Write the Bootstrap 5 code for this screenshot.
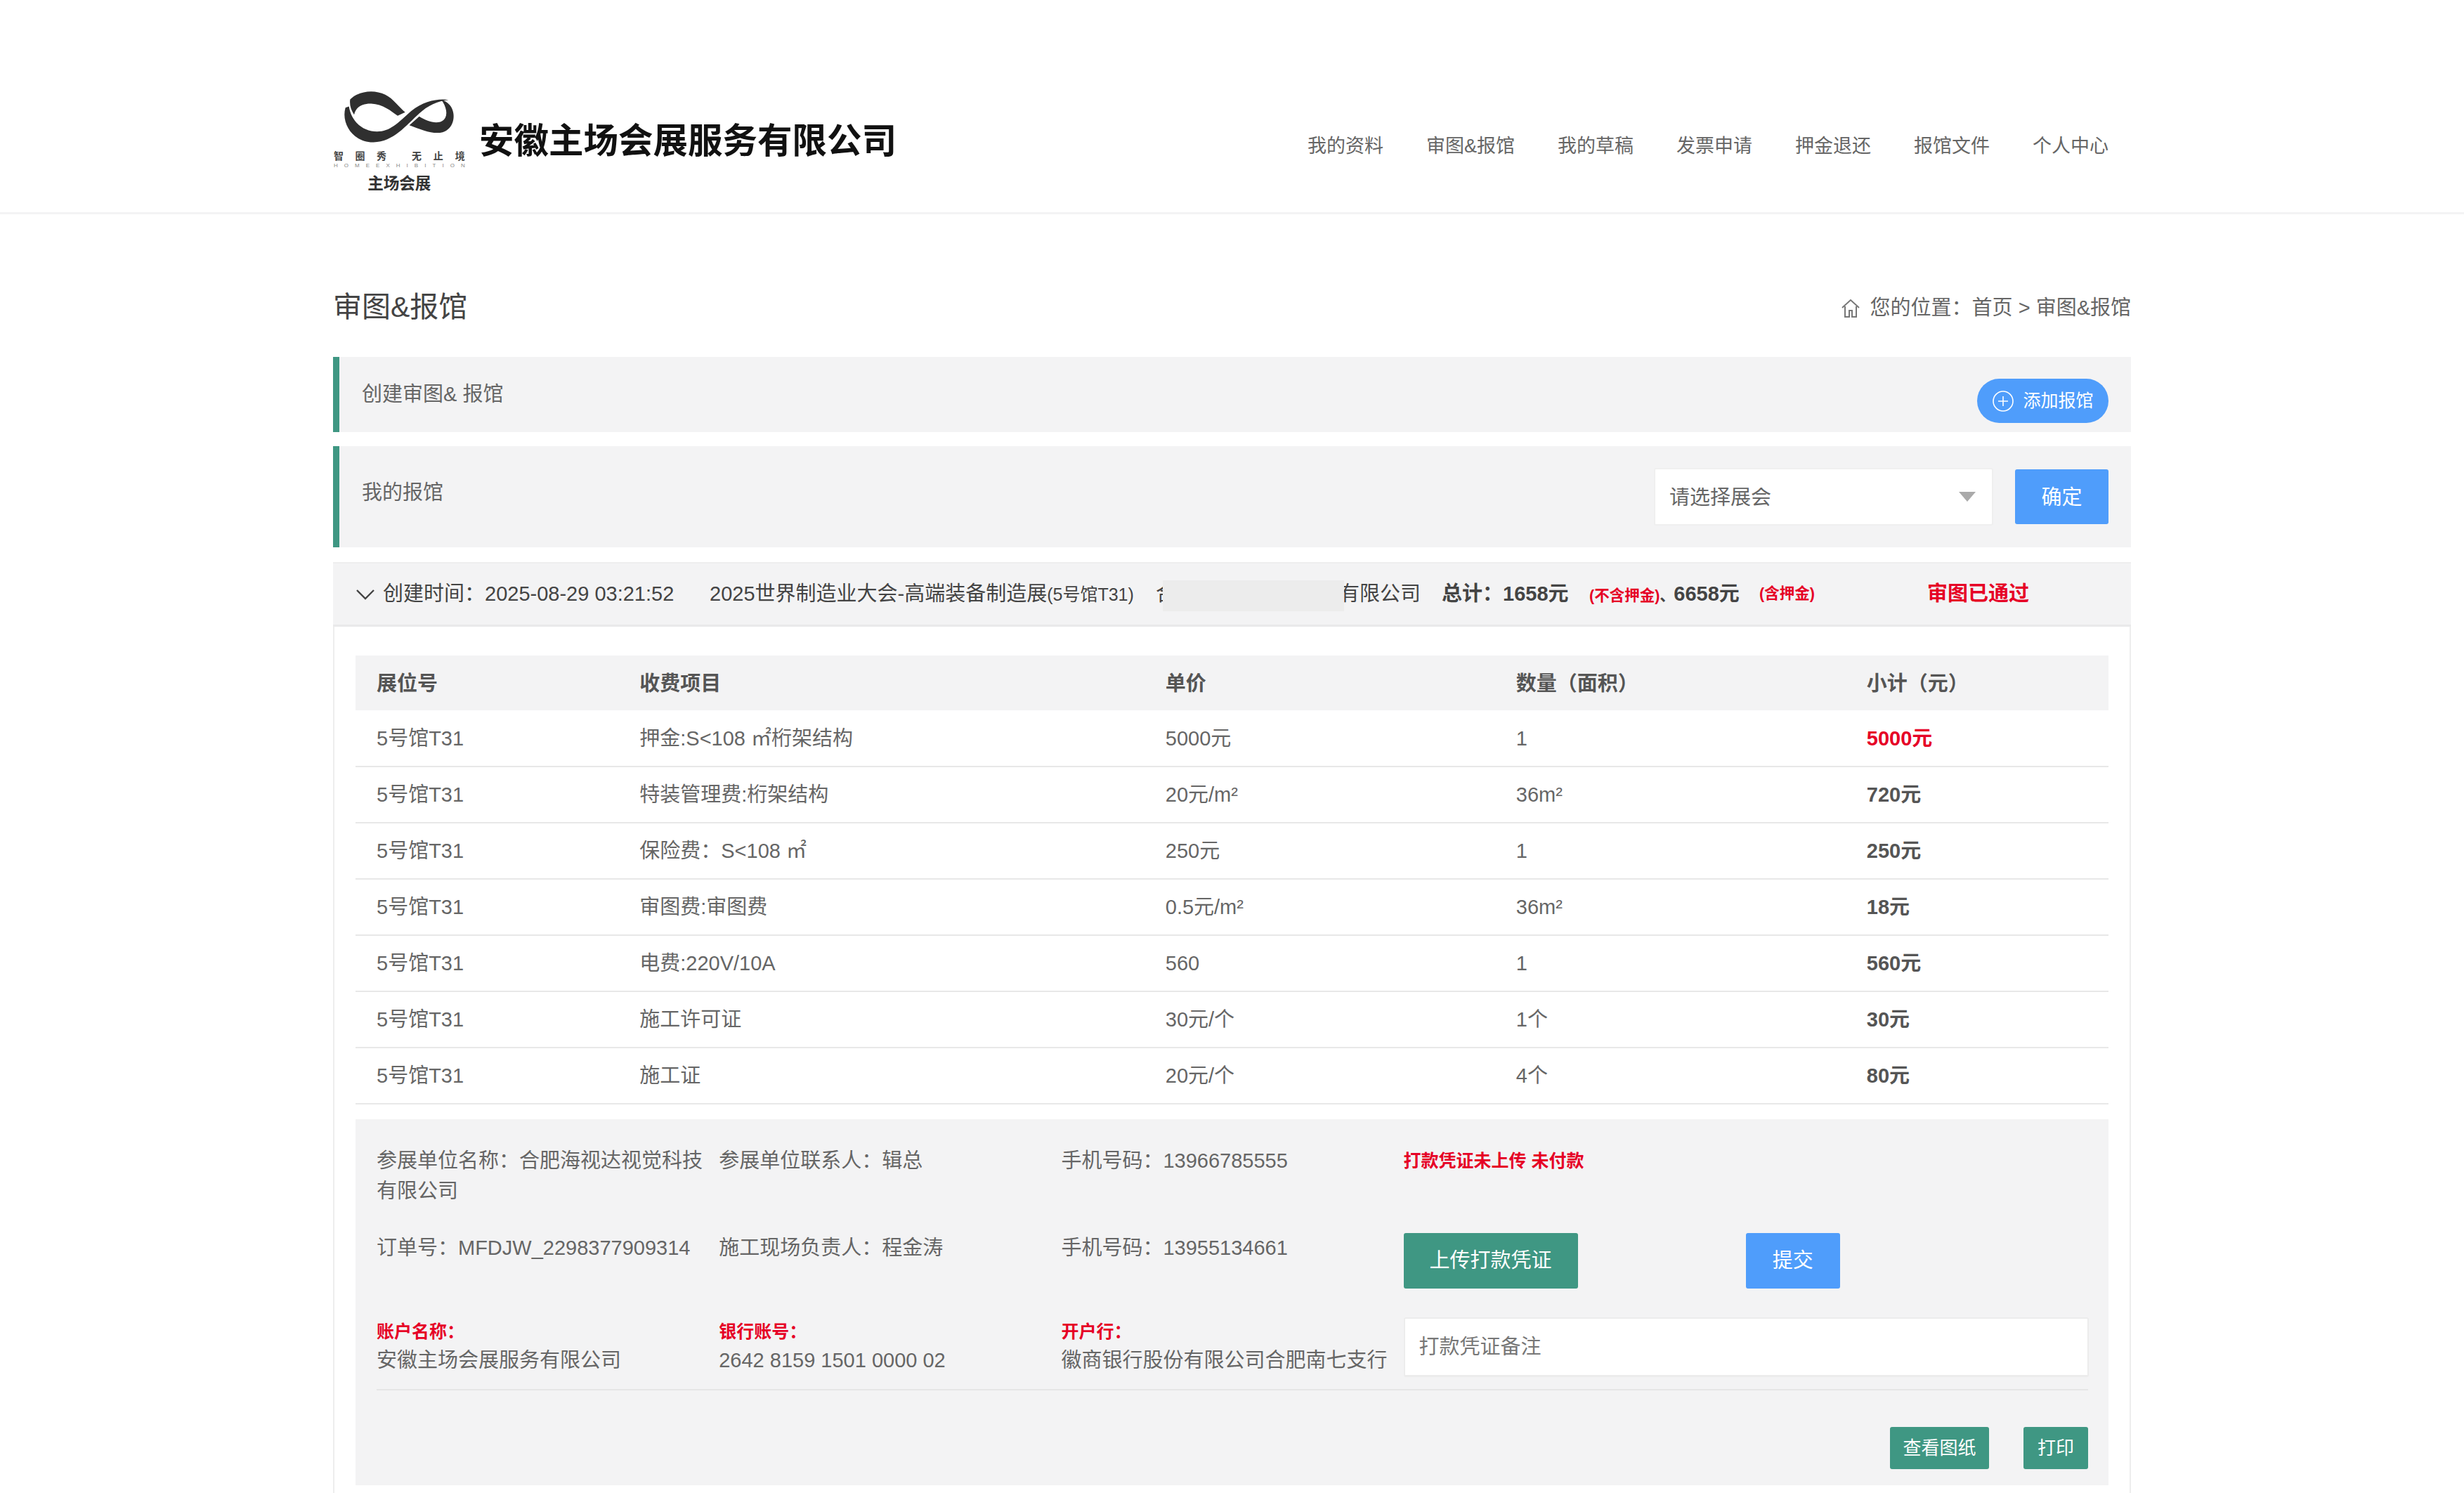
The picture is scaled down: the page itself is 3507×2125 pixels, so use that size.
<!DOCTYPE html>
<html lang="zh-CN">
<head>
<meta charset="utf-8">
<title>审图&amp;报馆</title>
<link href="https://cdn.jsdelivr.net/npm/bootstrap@5.3.0/dist/css/bootstrap.min.css" rel="stylesheet">
<style>
html,body{height:2125px;overflow:hidden}
body{font-family:"Liberation Sans","Noto Sans CJK SC",sans-serif;font-size:29px;color:#666;background:#fff}
.site-top{height:305px;border-bottom:3px solid #f3f3f4}
.wrap{width:2559px;margin-left:474px}
.top-inner{padding-top:128px;height:302px}
.logo-svg{width:190px;height:147px;flex:none}
.brand{font-size:49.5px;font-weight:700;color:#111;margin-left:18px;line-height:1;margin-top:48px;white-space:nowrap}
.top-menu{margin-left:auto;margin-right:32px;gap:61px;margin-top:64px;font-size:27px;line-height:32px}
.top-menu a{color:#666;text-decoration:none}
.crumb-row{height:203px;padding-top:104px}
.page-name{font-size:41px;line-height:56px;color:#444;font-weight:400;margin:0}
.trail{font-size:29px;color:#666;gap:14px;margin-top:8px}
.panel-line{background:#f3f3f4;border-left:9px solid #3f9783;padding-left:32px;padding-right:32px}
.panel-a{height:107px;margin-bottom:20px}
.panel-b{height:144px;margin-bottom:21px}
.panel-a .lab{margin-top:1px}
.panel-b .lab{margin-top:-11px}
.pill{background:#4f9dfb;color:#fff;border:0;border-radius:32px;height:63px;width:187px;font-size:25px;margin-top:18px;gap:12px;padding:0;display:flex;align-items:center;justify-content:center}
.pick{width:483px;height:82px;font-size:29px;line-height:1;color:#666;border:2px solid #efefef;border-radius:3px;padding:2px 20px 0;background-size:30px 18px;background-position:right 20px center;background-image:url("data:image/svg+xml,%3Csvg xmlns='http://www.w3.org/2000/svg' viewBox='0 0 30 18'%3E%3Cpath d='M3 2h24L15 16z' fill='%23aaa'/%3E%3C/svg%3E")}
.go{background:#4f9dfb;color:#fff;border:0;border-radius:3px;width:133px;height:78px;font-size:29px;margin-left:31px;padding:3px 0 0}
.order-box{border-left:2px solid #eee;border-right:2px solid #eee;height:1400px;border-radius:0;border-top:0;border-bottom:0;background:transparent}
.order-head{height:92px;background:#f3f3f4;border-bottom:3px solid #e9e9ea;color:#444;padding-left:33px;white-space:nowrap;position:relative;border-top:2px solid #eee;margin-left:-2px;margin-right:-2px;border-radius:0}
.order-head .t1{width:465px;margin-left:12px}
.order-head .t2{width:635px}
.order-head .t3{width:407px}
.order-head .t4{width:208px;font-weight:700}
.order-head .t7{font-weight:700;color:#e60026}
.mini{font-size:25px}
.tiny{font-size:21.5px;color:#e60026;font-weight:700}
.t-ex{width:214px;white-space:nowrap;margin-left:2px}
.t-in{width:239px;margin-left:28px}
.t-sep{color:#444;display:inline-block;width:14px}
.t-total{font-size:29px;color:#444;margin-left:6px}
.mask{position:absolute;left:1181px;top:24px;width:258px;height:44px;background:#ececec}
.order-body{padding:41px 30px 0}
.fee{margin:0;table-layout:fixed;--bs-table-bg:transparent;--bs-table-color:#666;font-size:29px;border-color:#e6e6e6}
.fee th{height:78px;background:#f3f3f4;color:#555;font-weight:700;vertical-align:middle;padding:3px 30px 0;border:0}
.fee td{height:80px;vertical-align:middle;padding:2px 30px 0;border-bottom:2px solid #e8e8e8;color:#666}
.fee td.sum{font-weight:700;color:#555}
.fee td.sum-red{color:#e60026}
.info{background:#f3f3f4;margin-top:21px;height:521px;padding:38px 29px 0 30px;line-height:42.5px}
.gap-a{margin-bottom:39px}
.gap-b{margin-bottom:41px}
.warn{color:#e60026;font-weight:700;font-size:25px}
.warn-lab{color:#e60026;font-weight:700;font-size:25px;line-height:30px;margin-top:5px;margin-bottom:5px}
.span-two{width:40%!important}
.act{border:0;border-radius:3px;color:#fff;padding:0;font-size:29px}
.act-green{background:#3f9783}
.act-blue{background:#4f9dfb}
.act-up{width:248px;height:79px}
.act-sub{width:134px;height:79px}
.memo{height:85px;border:2px solid #ececec;border-bottom-width:3px;border-radius:3px;font-size:29px;color:#666;padding:0 20px;width:975px;background:#fff}
.memo::placeholder{color:#777}
.rule{border-bottom:2px solid #e6e6e6;margin-top:17px;margin-bottom:52px}
.act-sm{height:60px;font-size:26px}
.w-look{width:141px;margin-right:49px}
.w-print{width:92px}
</style>
</head>
<body>
<header class="site-top">
  <div class="wrap d-flex top-inner">
    <svg class="logo-svg" viewBox="42 55 570 440" xmlns="http://www.w3.org/2000/svg" role="img" aria-label="主场会展">
      <path fill="#2f2f2f" d="M115 95C150 60 215 50 265 75C300 92 325 130 350 150L318 165C290 145 255 115 205 113C170 112 140 125 132 160C118 140 112 118 115 95Z"/>
      <path fill="#2f2f2f" d="M95 130C75 200 130 280 215 278C300 276 355 205 410 155C445 122 490 100 535 97C495 90 430 100 375 145C320 195 285 232 230 232C170 232 120 190 110 125Z"/>
      <path fill="#2f2f2f" d="M410 168L368 205C420 225 470 245 510 235C555 222 570 165 545 125C535 110 520 100 505 97C525 125 535 160 515 182C490 205 445 190 410 168Z"/>
      <text x="45" y="352" font-size="42" font-weight="700" fill="#444" textLength="225" lengthAdjust="spacing">智圈秀</text>
      <text x="378" y="352" font-size="42" font-weight="700" fill="#444" textLength="227" lengthAdjust="spacing">无止境</text>
      <text x="45" y="385" font-size="24" fill="#888" textLength="560" lengthAdjust="spacing">HOMEEXHIBITION</text>
      <text x="190" y="478" font-size="68" font-weight="700" fill="#333" textLength="270" lengthAdjust="spacing">主场会展</text>
    </svg>
    <div class="brand">安徽主场会展服务有限公司</div>
    <nav class="d-flex top-menu">
      <a href="#">我的资料</a><a href="#">审图&amp;报馆</a><a href="#">我的草稿</a><a href="#">发票申请</a><a href="#">押金退还</a><a href="#">报馆文件</a><a href="#">个人中心</a>
    </nav>
  </div>
</header>
<main class="wrap">
  <div class="d-flex justify-content-between align-items-start crumb-row">
    <h1 class="page-name">审图&amp;报馆</h1>
    <div class="d-flex align-items-center trail">
      <svg width="28" height="30" viewBox="0 0 28 30" fill="none" stroke="#777" stroke-width="2"><path d="M2 14 14 3l12 11M6 12v15h6v-9h4v9h6V12"/></svg>
      <span>您的位置：首页 &gt; 审图&amp;报馆</span>
    </div>
  </div>
  <section class="panel-line panel-a d-flex justify-content-between align-items-center">
    <span class="lab">创建审图&amp; 报馆</span>
    <button class="pill" type="button">
      <svg width="32" height="32" viewBox="0 0 32 32" fill="none" stroke="#fff" stroke-width="1.6"><circle cx="16" cy="16" r="14"/><path d="M16 9v14M9 16h14"/></svg>
      <span>添加报馆</span>
    </button>
  </section>
  <section class="panel-line panel-b d-flex align-items-center">
    <span class="lab me-auto">我的报馆</span>
    <select class="form-select pick" aria-label="请选择展会"><option>请选择展会</option></select>
    <button class="go" type="button">确定</button>
  </section>
  <section class="card order-box">
    <div class="order-head d-flex align-items-center">
      <svg width="26" height="16" viewBox="0 0 26 16" fill="none" stroke="#444" stroke-width="2.4"><path d="M1 2l12 12L25 2"/></svg>
      <span class="t1">创建时间：2025-08-29 03:21:52</span>
      <span class="t2">2025世界制造业大会-高端装备制造展<span class="mini">(5号馆T31)</span></span>
      <span class="t3">合肥海视达视觉科技有限公司</span>
      <span class="t4">总计：1658元</span>
      <span class="tiny t-ex">(不含押金)<span class="t-sep">、</span><span class="t-total">6658元</span></span>
      <span class="tiny t-in">(含押金)</span>
      <span class="t7">审图已通过</span>
      <span class="mask"></span>
    </div>
    <div class="order-body">
      <table class="table fee">
        <colgroup><col style="width:15%"><col style="width:30%"><col style="width:20%"><col style="width:20%"><col style="width:15%"></colgroup>
        <thead><tr><th>展位号</th><th>收费项目</th><th>单价</th><th>数量（面积）</th><th>小计（元）</th></tr></thead>
        <tbody>
          <tr><td>5号馆T31</td><td>押金:S&lt;108 ㎡桁架结构</td><td>5000元</td><td>1</td><td class="sum sum-red">5000元</td></tr>
          <tr><td>5号馆T31</td><td>特装管理费:桁架结构</td><td>20元/m²</td><td>36m²</td><td class="sum">720元</td></tr>
          <tr><td>5号馆T31</td><td>保险费：S&lt;108 ㎡</td><td>250元</td><td>1</td><td class="sum">250元</td></tr>
          <tr><td>5号馆T31</td><td>审图费:审图费</td><td>0.5元/m²</td><td>36m²</td><td class="sum">18元</td></tr>
          <tr><td>5号馆T31</td><td>电费:220V/10A</td><td>560</td><td>1</td><td class="sum">560元</td></tr>
          <tr><td>5号馆T31</td><td>施工许可证</td><td>30元/个</td><td>1个</td><td class="sum">30元</td></tr>
          <tr><td>5号馆T31</td><td>施工证</td><td>20元/个</td><td>4个</td><td class="sum">80元</td></tr>
        </tbody>
      </table>
      <div class="info">
        <div class="row row-cols-5 g-0 gap-a">
          <div class="col pe-3">参展单位名称：合肥海视达视觉科技有限公司</div>
          <div class="col">参展单位联系人：辑总</div>
          <div class="col">手机号码：13966785555</div>
          <div class="col warn">打款凭证未上传 未付款</div>
        </div>
        <div class="row row-cols-5 g-0 gap-b">
          <div class="col">订单号：MFDJW_2298377909314</div>
          <div class="col">施工现场负责人：程金涛</div>
          <div class="col">手机号码：13955134661</div>
          <div class="col"><button class="act act-green act-up" type="button">上传打款凭证</button></div>
          <div class="col"><button class="act act-blue act-sub" type="button">提交</button></div>
        </div>
        <div class="row row-cols-5 g-0">
          <div class="col"><div class="warn-lab">账户名称：</div><div>安徽主场会展服务有限公司</div></div>
          <div class="col"><div class="warn-lab">银行账号：</div><div>2642 8159 1501 0000 02</div></div>
          <div class="col text-nowrap"><div class="warn-lab">开户行：</div><div>徽商银行股份有限公司合肥南七支行</div></div>
          <div class="col span-two"><input class="form-control memo" type="text" placeholder="打款凭证备注"></div>
        </div>
        <div class="rule"></div>
        <div class="d-flex justify-content-end">
          <button class="act act-green act-sm w-look" type="button">查看图纸</button>
          <button class="act act-green act-sm w-print" type="button">打印</button>
        </div>
      </div>
    </div>
  </section>
</main>
<script src="https://cdn.jsdelivr.net/npm/bootstrap@5.3.0/dist/js/bootstrap.bundle.min.js"></script>
</body>
</html>
